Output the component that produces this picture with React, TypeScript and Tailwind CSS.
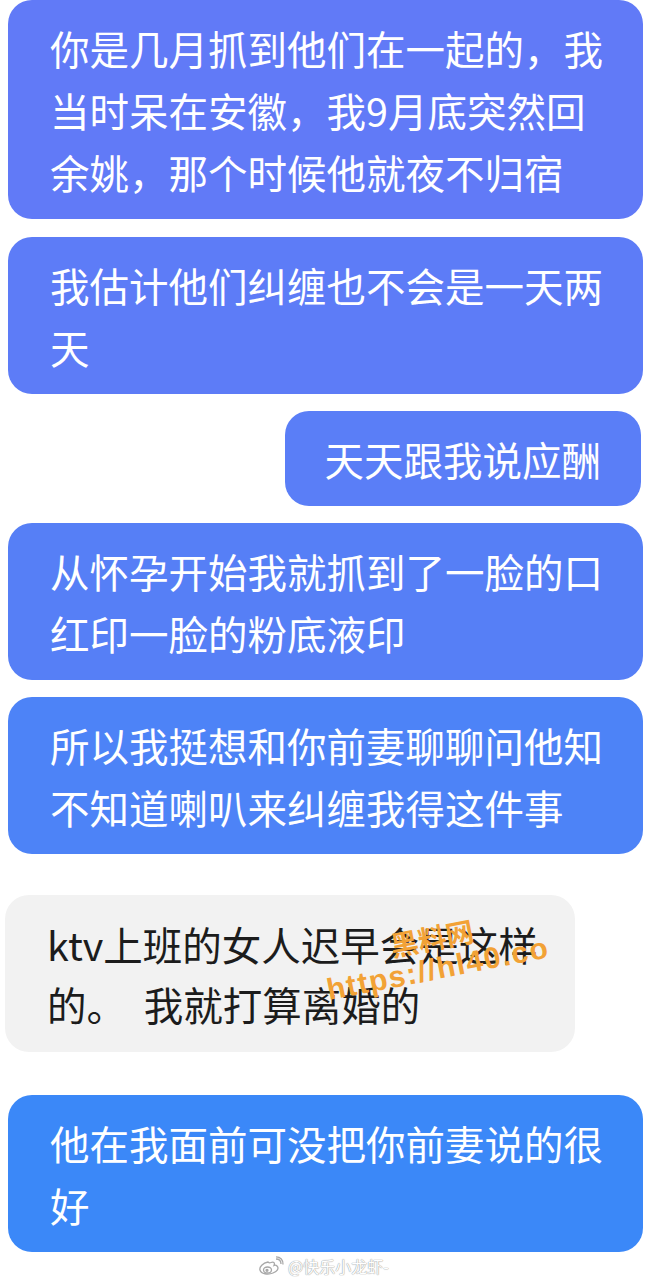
import React from "react";

const font = '"Noto Sans CJK SC", "Noto Sans", sans-serif';

function Blue({ color, children, className = "" }: { color: string; children: React.ReactNode; className?: string }) {
  return (
    <div
      className={`rounded-[24px] pl-[42px] pr-[36px] pt-[17px] pb-[16px] text-[39.5px] leading-[62px] text-white ${className}`}
      style={{ backgroundColor: color }}
    >
      {children}
    </div>
  );
}

export default function App() {
  return (
    <div className="relative min-h-[1280px] w-[651px] overflow-hidden bg-white" style={{ fontFamily: font }}>
      <div className="flex flex-col px-2">
        <Blue color="#617af7">
          你是几月抓到他们在一起的，我当时呆在安徽，我9月底突然回余姚，那个时候他就夜不归宿
        </Blue>
        <Blue color="#5d7cf7" className="mt-[18px]">
          我估计他们纠缠也不会是一天两天
        </Blue>
        <Blue color="#5a7ef7" className="mt-[17px] mr-[2px] self-end !pl-[40px] !pr-[40px]">
          天天跟我说应酬
        </Blue>
        <Blue color="#567ff6" className="mt-[17px]">
          从怀孕开始我就抓到了一脸的口红印一脸的粉底液印
        </Blue>
        <Blue color="#4d83f7" className="mt-[17px]">
          所以我挺想和你前妻聊聊问他知不知道喇叭来纠缠我得这件事
        </Blue>
        <div className="ml-[-3px] mt-[41px] w-[570px] whitespace-pre-wrap rounded-[24px] bg-[#f2f2f2] pt-[19px] pb-[18px] pl-[42px] pr-[28px] text-[39.5px] leading-[60px] text-[#1c1c1c]">
          {"ktv上班的女人迟早会是这样的。  我就打算离婚的"}
        </div>
        <Blue color="#3b88f8" className="mt-[43px]">
          他在我面前可没把你前妻说的很好
        </Blue>
        <div className="flex h-[27px] items-center pl-[250px] text-[16px] text-white" style={{ textShadow: "0 0 1px #9a9a9a, 0 0 1px #9a9a9a" }}>
          <svg width="26" height="20" viewBox="0 0 26 20" fill="none" stroke="#a8a8a8" strokeWidth="1.3">
            <path d="M10 6 C5 7 1 11 2 14 C3 18 10 19 15 17 C20 15 21 12 19 10 C18 9 17 9 16 9.5 C17 7 16 5.5 13 6.5 C12 7 11 7 10 6 Z" fill="white" />
            <ellipse cx="9.5" cy="14" rx="4" ry="3" />
            <circle cx="9" cy="14.3" r="1" fill="#a8a8a8" />
            <path d="M18 3 C21 3 23 5 23 8" />
            <path d="M18 0.8 C22.5 0.8 25.3 4 25 8.5" />
          </svg>
          <span className="ml-[4px]" style={{ fontFamily: font }}>@快乐小龙虾-</span>
        </div>
      </div>

      <div
        className="absolute left-[310px] top-[922px] flex w-[250px] -rotate-[11deg] flex-col items-center font-bold text-[#f2a236]"
        style={{ fontFamily: '"Liberation Sans", "Noto Sans CJK SC", sans-serif' }}
      >
        <div className="text-[28px] leading-[30px]" style={{ fontFamily: '"Noto Sans CJK SC", sans-serif' }}>黑料网</div>
        <div className="text-[30px] leading-[34px] tracking-[1.5px]">https://hl40.co</div>
      </div>
    </div>
  );
}
